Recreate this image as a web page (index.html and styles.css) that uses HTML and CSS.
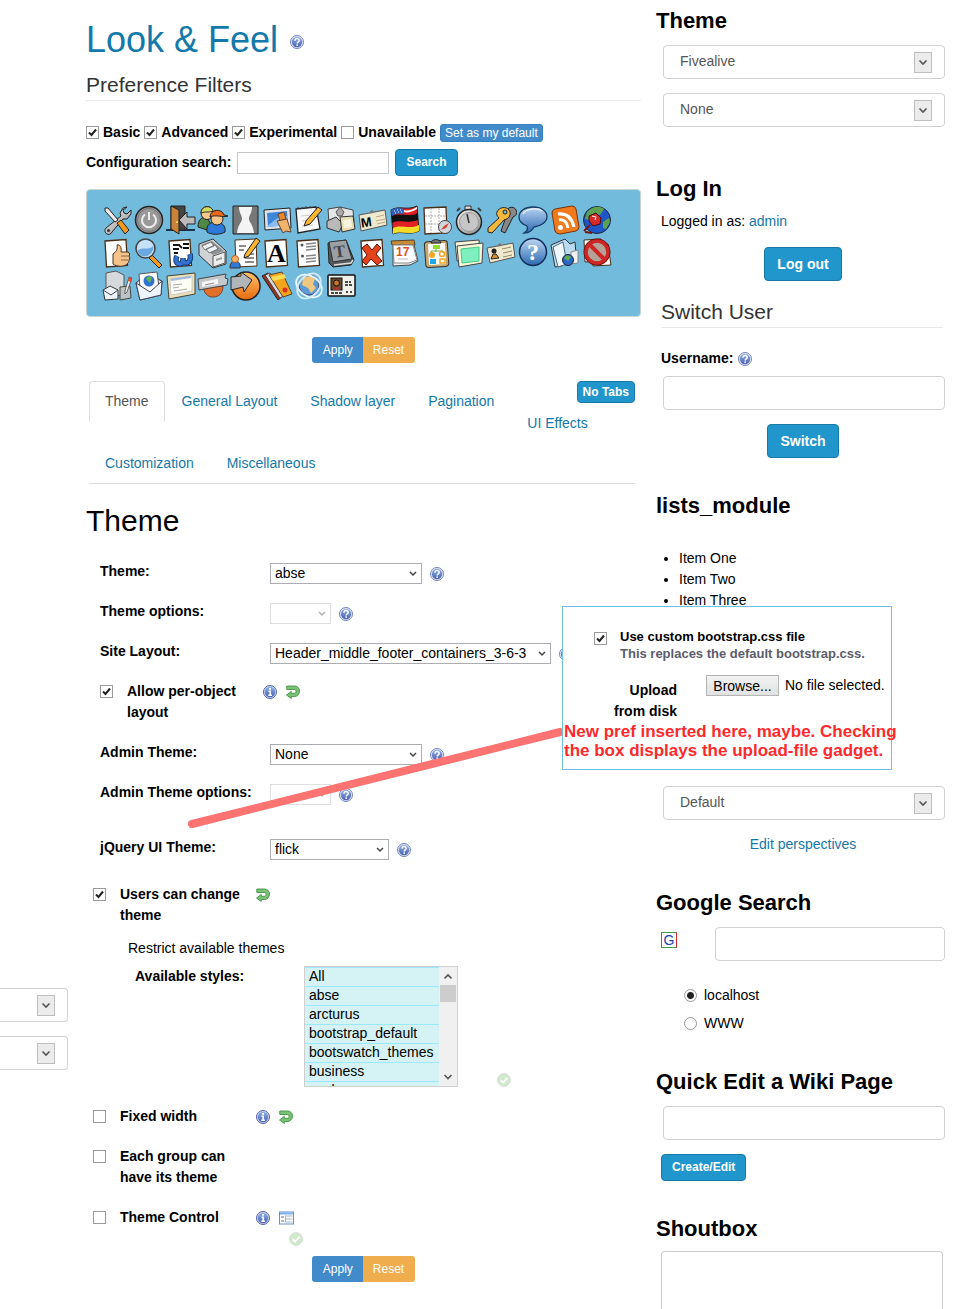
FILE: index.html
```html
<!DOCTYPE html>
<html lang="en">
<head>
    <meta charset="UTF-8">
    <meta name="viewport" content="width=device-width, initial-scale=1.0">
    <title>Look &amp; Feel</title>
    <link rel="stylesheet" href="styles.css">
</head>
<body>
    <!-- shared icons -->
    <svg class="defs" width="0" height="0" aria-hidden="true">
        <defs>
            <linearGradient id="g-blue" x1="0" y1="0" x2="0" y2="1"><stop offset="0" stop-color="#b9d6f2"/><stop offset="1" stop-color="#2d69b0"/></linearGradient>
            <linearGradient id="g-grey" x1="0" y1="0" x2="1" y2="1"><stop offset="0" stop-color="#f4f4f4"/><stop offset="1" stop-color="#8d8d8d"/></linearGradient>
            <linearGradient id="g-orange" x1="0" y1="0" x2="0" y2="1"><stop offset="0" stop-color="#ffc26a"/><stop offset="1" stop-color="#e8690b"/></linearGradient>
            <linearGradient id="g-badge" x1="0" y1="0" x2="0" y2="1"><stop offset="0" stop-color="#8fb0e4"/><stop offset="1" stop-color="#4a62b4"/></linearGradient>
        </defs>
        <symbol id="help" viewBox="0 0 14 14">
            <circle cx="7" cy="7" r="6.5" fill="#e4ebf8" stroke="#7484bd"/>
            <circle cx="7" cy="7" r="5.2" fill="url(#g-badge)"/>
            <path d="M5 5.700c0-2.800 4.200-2.700 4.200-.300C9.200 6.900 7.200 6.900 7.200 8.500" fill="none" stroke="#fff" stroke-width="1.500"/>
            <rect x="6.400" y="9.400" width="1.600" height="1.500" fill="#fff"/>
        </symbol>
        <symbol id="info" viewBox="0 0 14 14">
            <circle cx="7" cy="7" r="6.5" fill="#cfd9f0" stroke="#5461a5"/>
            <circle cx="7" cy="7" r="5.2" fill="url(#g-badge)"/>
            <rect x="6" y="3" width="2" height="1.700" fill="#fff"/>
            <path d="M5.500 6.200H7.200V10M5.300 10.300h3.700" fill="none" stroke="#fff" stroke-width="1.500"/>
        </symbol>
        <symbol id="undo" viewBox="0 0 14 14">
            <path d="M.8 1h7.700c3 0 5 2.200 5 5s-2 5.500-5 5.500H5.300V13.500L.5 10l4.800-3.600v1.900h2.900c1.200 0 1.900-.8 1.900-1.900s-.7-1.900-1.900-1.900H.8z" fill="#7cc078" stroke="#3f9443" stroke-width=".9"/>
        </symbol>
        <symbol id="tick" viewBox="0 0 14 14">
            <circle cx="7" cy="7" r="6.500" fill="#cfe9cb" stroke="#dde0dd"/>
            <path d="M3.800 7.200l2.400 2.400 4.300-4.800" fill="none" stroke="#fff" stroke-width="2"/>
        </symbol>
        <symbol id="panel" viewBox="0 0 15 13">
            <rect x=".5" y=".5" width="14" height="12" fill="#fff" stroke="#6d8fc4"/>
            <rect x="1" y="1" width="13" height="2" fill="#7fb3ee"/>
            <path d="M2 5.500h3M2 9.500h3" stroke="#5a6fa0"/>
            <path d="M6.500 4.500h7M6.500 7.500h7M6.500 10.500h7M6.500 4v7" stroke="#a9b4c9"/>
        </symbol>
        <symbol id="page" viewBox="0 0 32 32">
            <path d="M4 4l21-1.500 1.500 26L5.500 30z" fill="#fff" stroke="#4a2e17" stroke-width="1.300"/>
        </symbol>
    </svg>

    <div class="page">
        <div class="col-left">
            <select class="form-control" aria-label="Site theme"><option></option></select>
            <select class="form-control" aria-label="Theme option"><option></option></select>
        </div>

        <main class="col-main">
            <div class="title">
                <h1><a href="#">Look &amp; Feel</a></h1>
                <svg class="ico"><use href="#help"/></svg>
            </div>

            <form>
                <h4 class="legend">Preference Filters</h4>
                <div class="filters">
                    <input type="checkbox" id="f-basic" checked><label for="f-basic">Basic</label>
                    <input type="checkbox" id="f-adv" checked><label for="f-adv">Advanced</label>
                    <input type="checkbox" id="f-exp" checked><label for="f-exp">Experimental</label>
                    <input type="checkbox" id="f-una"><label for="f-una">Unavailable</label>
                    <button type="button" class="btn-default-set">Set as my default</button>
                </div>
                <div class="config-search">
                    <label for="conf">Configuration search:</label>
                    <input type="text" id="conf" class="plain-input">
                    <button type="button" class="btn btn-sm">Search</button>
                </div>
            </form>

            <nav class="admin-bar">
                <!-- row 1 -->
                <a href="#" title="General"><svg viewBox="0 0 32 32"><path d="M26 3l-4 1-3 5 1 3L5 24c-2 2-1 5 1 6s4 0 5-2l11-13 4 0 4-5 0-4-4 4-3-1-1-3z" fill="url(#g-grey)" stroke="#222"/><path d="M4 4l3 0 10 12-3 2L4 7z" fill="#eee" stroke="#222"/><path d="M16 19l4-3 8 10-4 4z" fill="#f79a1c" stroke="#222"/><circle cx="7.500" cy="26.500" r="1.500" fill="#333"/></svg></a>
                <a href="#" title="Features"><svg viewBox="0 0 32 32"><circle cx="16" cy="16" r="13.500" fill="#999" stroke="#222" stroke-width="1.500"/><circle cx="16" cy="16" r="11.500" fill="none" stroke="#777"/><path d="M12 10.500a7 7 0 1 0 8 0M16 8v8" fill="none" stroke="#eee" stroke-width="2"/></svg></a>
                <a href="#" title="Log in"><svg viewBox="0 0 32 32"><path d="M1 26h29" stroke="#1c3546" stroke-width="2"/><path d="M6 2h14v24H6z" fill="#444" stroke="#222"/><path d="M6 2l8 4v24l-8-5z" fill="#c8823a" stroke="#222"/><circle cx="12" cy="18" r="1" fill="#fd6"/><path d="M14 16l8-8v5h8v7h-8v5z" fill="#bbb" stroke="#222"/></svg></a>
                <a href="#" title="User"><svg viewBox="0 0 32 32"><path d="M1 23c0-7 3-10 9-10l4 8-4 5z" fill="#4e8a45" stroke="#222"/><ellipse cx="10" cy="9" rx="6" ry="6.500" fill="#f5c98c" stroke="#222"/><path d="M4 9c0-8 11-8 12-2-4 2-8 0-12 2z" fill="#d5d95e" stroke="#333"/><path d="M10 28c-1-7 3-10 9-10s10 4 9 10c-5 3-14 3-18 0z" fill="#2f7ad6" stroke="#222"/><ellipse cx="20" cy="15" rx="6" ry="6" fill="#f6c48b" stroke="#222"/><path d="M13 13c0-8 12-9 14-2l4 1c-5 2-12-2-18 1z" fill="#e8681b" stroke="#222"/></svg></a>
                <a href="#" title="Profile"><svg viewBox="0 0 32 32"><path d="M4 2h25v28H4z" fill="#777" stroke="#222"/><path d="M10 3h13c0 6-3 8-3 12 0 3 4 5 5 14H8c1-9 5-11 5-14 0-4-3-6-3-12z" fill="#f4f4f4"/></svg></a>
                <a href="#" title="Look &amp; Feel"><svg viewBox="0 0 32 32"><path d="M3 6l26-2 1 20-26 2z" fill="#dfe4ea" stroke="#222"/><path d="M6 9l20-2 1 14-20 2z" fill="#3d86d8"/><path d="M6 22c5-2 8-10 20-10v9L7 23z" fill="#8bbdf0"/><path d="M17 10l6-2 2 7-6 2z" fill="#e8862b" stroke="#643"/><path d="M16 17l10-2 4 13-5-1-3 2-2-4z" fill="#f2b36c" stroke="#643"/></svg></a>
                <a href="#" title="Editing"><svg viewBox="0 0 32 32"><path d="M3 5l20-2 4 22-22 4z" fill="#fafafa" stroke="#222" stroke-width="1.300"/><path d="M5 5v-2M9 5v-2M13 4v-2M17 4v-2" stroke="#444"/><path d="M8 12l10-1M9 17l8-1M9 22l11-1" stroke="#ccc"/><path d="M13 17L25 3l4 3-12 14-6 2z" fill="#f9b52f" stroke="#222"/></svg></a>
                <a href="#" title="Modules"><svg viewBox="0 0 32 32"><path d="M3 5l12-2 13 3 1 12-13 4-12-3z" fill="#e6e6e6" stroke="#444"/><path d="M2 17l9-4 7 7-4 8-12-4z" fill="#b9b9b9" stroke="#333"/><path d="M15 13l13-1 2 13-13 3z" fill="#e8dfb4" stroke="#333"/><path d="M18 16l8-1 1 8-8 1z" fill="#f8f4e0"/><path d="M11 8l4-5 4 5-2 4h-4z" fill="#aaa" stroke="#555"/></svg></a>
                <a href="#" title="Metatags"><svg viewBox="0 0 32 32"><path d="M2 11l26-5 2 15-26 6z" fill="#efe9cf" stroke="#555"/><path d="M13 7l3-1 .500 3-3 .600z" fill="#777"/><text x="4" y="23" font-size="13" class="ic-b" transform="rotate(-8 8 20)">M</text><path d="M19 13l8-2M19 17l9-2M20 20l8-2" stroke="#b9a97a"/></svg></a>
                <a href="#" title="i18n"><svg viewBox="0 0 32 32"><path d="M2 6C10 1 18 7 28 2l2 25C20 32 12 26 4 30z" fill="#e21f26" stroke="#222"/><path d="M14 6c5 1 9 0 14-3v2c-5 3-9 4-14 3z" fill="#fff"/><path d="M2 6c5-3 9-2 13-1v5C11 9 7 9 3 12z" fill="#2b62c0"/><path d="M5 7h1M8 6h1M11 6h1M6 9h1M9 8h1M12 8h1" stroke="#fff"/><path d="M3 12c9-4 16 2 26-3v7c-10 4-17-1-26 3z" fill="#111"/><path d="M4 24c9-4 15 2 26-3v6C20 32 12 26 4 30z" fill="#f3dc27"/></svg></a>
                <a href="#" title="Maps"><svg viewBox="0 0 32 32"><path d="M3 4l22-1 1 26-22 1z" fill="#fff" stroke="#4a2e17" stroke-width="1.300"/><path d="M10 4v25M18 4v25M4 12h21M4 20h21" stroke="#aaa" stroke-dasharray="2 1"/><circle cx="24" cy="23" r="6.500" fill="#cfd6dc" stroke="#444"/><path d="M20 26l3-4 5-3-3 5z" fill="#e03c28"/></svg></a>
                <a href="#" title="Performance"><svg viewBox="0 0 32 32"><path d="M12 2h6v5h-6z" fill="#ddd" stroke="#333"/><circle cx="16" cy="18" r="12.500" fill="url(#g-grey)" stroke="#222" stroke-width="1.500"/><circle cx="16" cy="18" r="9.500" fill="#c6c6c6" stroke="#999"/><path d="M16 19l-2-9" stroke="#333" stroke-width="1.500"/><path d="M4 7l3-3M28 7l-3-3" stroke="#444" stroke-width="2"/></svg></a>
                <a href="#" title="Security"><svg viewBox="0 0 32 32"><path d="M22 10a5 5 0 1 1 6 3l-8 16-4-2z" fill="#888" stroke="#222"/><path d="M12 8c2-5 9-6 12-2s0 9-5 10L7 29l-4-1v-4L14 14c-2-2-3-4-2-6z" fill="#f5b83a" stroke="#222"/><circle cx="20" cy="8" r="2" fill="#6fb9dd" stroke="#222"/></svg></a>
                <a href="#" title="Comments"><svg viewBox="0 0 32 32"><path d="M16 3c8 0 14 4 14 9.500S24 22 17 23c-2 4-5 6-10 6 3-2 4-5 3-7-5-2-8-5-8-9C2 7 8 3 16 3z" fill="url(#g-blue)" stroke="#173a66" stroke-width="1.300"/><path d="M6 10c2-5 15-7 19-3" stroke="#e5f1fc" fill="none" stroke-width="1.500"/></svg></a>
                <a href="#" title="RSS"><svg viewBox="0 0 32 32"><path d="M6 5l17-3q3 0 4 3l3 18q0 3-3 4L11 30q-4 0-5-3L3 9q0-3 3-4z" fill="#f07a1e" stroke="#7a3305"/><circle cx="11.500" cy="23.500" r="2.500" fill="#fff"/><path d="M10 16c5-1 8 2 9 8M9 10c9-1 14 4 16 13" fill="none" stroke="#fff" stroke-width="3"/></svg></a>
                <a href="#" title="Connect"><svg viewBox="0 0 32 32"><circle cx="16" cy="16" r="13.500" fill="#1f57c8" stroke="#223"/><path d="M6 8c6-7 14-6 17-3l-4 6-5-2-5 7-5-1zM22 18l6-4 1 4-4 7-3-1z" fill="#5aa252"/><path d="M8 12l7-3 5 5-1 6-7 2-4-5z" fill="#d42a2a" stroke="#4a0a0a"/><path d="M9 21l-6 6M4 28l7 1" stroke="#7a1515" stroke-width="2"/><path d="M11 12l4 1-1 3" fill="none" stroke="#fff"/></svg></a>
                <!-- row 2 -->
                <a href="#" title="Rating"><svg viewBox="0 0 32 32"><use href="#page"/><path d="M12 17c3-2 5-5 4-9 3-1 5 3 4 7l7 0c2 1 2 3 1 4 1 1 1 3 0 4 0 2-1 3-2 4-3 3-10 3-14 0z" fill="#f5c28a" stroke="#432"/><path d="M20 19h8M20 23h7" stroke="#864"/></svg></a>
                <a href="#" title="Search"><svg viewBox="0 0 32 32"><path d="M19 18l10 10-3 3-10-10z" fill="#f39a1d" stroke="#222"/><circle cx="12.500" cy="11.500" r="9.500" fill="#c4e1f8" stroke="#444" stroke-width="1.600"/><path d="M4.500 14c4-5 11 0 16-5 0 11-13 14-16 5z" fill="#6ba8e2"/></svg></a>
                <a href="#" title="Wiki"><svg viewBox="0 0 32 32"><use href="#page"/><path d="M8 8h6l3 3M18 7h6M8 12h6M18 11h6M9 16h4" fill="none" stroke="#111" stroke-width="1.800"/><path d="M12 19c-2 4-1 8 3 8 3 0 3-4 3-6 0 3 0 5 3 5 4 0 5-5 4-9" fill="none" stroke="#123a78" stroke-width="5.500"/><path d="M12 19c-2 4-1 8 3 8 3 0 3-4 3-6 0 3 0 5 3 5 4 0 5-5 4-9" fill="none" stroke="#3572d0" stroke-width="3.500"/></svg></a>
                <a href="#" title="File gallery"><svg viewBox="0 0 32 32"><path d="M2 7l14-5 13 12v13l-13 4L2 18z" fill="#d0d2d4" stroke="#333"/><path d="M4 8l11-4 12 10-11 4z" fill="#8b9195"/><path d="M5 9l9-4 3 4-9 4zM9 12l9-4 3 4-9 4z" fill="#f0f4f6" stroke="#555" stroke-width=".700"/><path d="M16 19l12-4v11l-12 4z" fill="#eceded" stroke="#555"/><path d="M19 22l6-2v2l-6 2z" fill="#999"/></svg></a>
                <a href="#" title="Blogs"><svg viewBox="0 0 32 32"><path d="M6 3l21-1 1 27-21 1z" fill="#fff" stroke="#4a2e17"/><path d="M10 9h7M10 13h5M16 17h9M16 21h9M16 25h9" stroke="#666" stroke-width="1.500"/><path d="M16 17L27 1l4 3-11 15-5 2z" fill="#f9b52f" stroke="#222"/><path d="M1 31c0-5 2-7 5-7s6 2 5 7z" fill="#2f7ad6" stroke="#333"/><circle cx="6" cy="22" r="3.500" fill="#f3b069" stroke="#c35d16"/></svg></a>
                <a href="#" title="Text area"><svg viewBox="0 0 32 32"><use href="#page"/><text x="6" y="25" font-size="26" class="ic-serif">A</text></svg></a>
                <a href="#" title="Forums"><svg viewBox="0 0 32 32"><use href="#page"/><path d="M13 7l10-1M13 10l10-1M13 13l10-1M13 19l10-1M13 22l10-1M13 25l10-1" stroke="#888" stroke-width="1.500"/><circle cx="9" cy="8" r="1.500" fill="#555"/><circle cx="9.500" cy="19" r="1.500" fill="#555"/></svg></a>
                <a href="#" title="FAQs"><svg viewBox="0 0 32 32"><path d="M3 6l18-3 8 20-3 5-18 2-4-4z" fill="#55595d" stroke="#222"/><path d="M4 5l17-2 6 19-19 3z" fill="#9aa0a6" stroke="#333"/><path d="M9 28l17-2 2-3" fill="none" stroke="#ddd" stroke-width="1.500"/><text x="9" y="20" font-size="17" class="ic-t" transform="rotate(-8 14 15)">T</text></svg></a>
                <a href="#" title="Trackers off"><svg viewBox="0 0 32 32"><use href="#page"/><path d="M5 11l5-4 5 6 5-6 4 4-5 6 6 7-5 4-6-6-5 6-4-4 5-6z" fill="#e2431d" stroke="#5b1405"/></svg></a>
                <a href="#" title="Calendar"><svg viewBox="0 0 32 32"><path d="M4 6l20-2 5 20-8 4-17 1z" fill="#eee" stroke="#444"/><path d="M2 4l23-1 1 5-23 0z" fill="#c98b35" stroke="#543"/><path d="M4 8h20l4 15-8 3H5z" fill="#fdfdfd" stroke="#888"/><text x="7" y="19" font-size="12" class="ic-red">17</text><path d="M9 22h10" stroke="#bbb"/></svg></a>
                <a href="#" title="Workflow"><svg viewBox="0 0 32 32"><rect x="4" y="4" width="23" height="26" rx="3" fill="#c9a56a" stroke="#333" transform="rotate(-4 16 16)"/><path d="M7 7l17-1 1 21-17 1z" fill="#fff"/><path d="M10 6c0-4 9-5 10 0z" fill="#777" stroke="#222"/><rect x="12" y="8" width="7" height="4" fill="#8fdc2c"/><path d="M15 12v3M10 16v-2h12v2" stroke="#7a4" fill="none"/><circle cx="11" cy="18" r="3" fill="#f5a623"/><circle cx="21" cy="17" r="2.500" fill="none" stroke="#f5a623" stroke-width="1.500"/><rect x="9" y="22" width="6" height="5" fill="#1ba7e8"/><rect x="19" y="22" width="5" height="4" fill="none" stroke="#f5a623" stroke-width="1.500"/></svg></a>
                <a href="#" title="Galleries"><svg viewBox="0 0 32 32"><path d="M2 5l24-2 1 19-23 2z" fill="#f7f4dc" stroke="#444"/><path d="M4 9l26-3-1 20-23 4z" fill="#f7f4dc" stroke="#444"/><path d="M8 12l18-2v14L9 26z" fill="#7ef0c0" stroke="#4c8"/></svg></a>
                <a href="#" title="Articles"><svg viewBox="0 0 32 32"><path d="M2 11l26-5 2 14-25 6z" fill="#efe9cf" stroke="#555"/><path d="M13 7l3-1 .500 3-3 .600z" fill="#777"/><circle cx="9" cy="14" r="2.500" fill="#222"/><path d="M6 22l2-5h3l3 4z" fill="#d9902f" stroke="#222"/><path d="M17 12l9-2M18 16l9-2M18 20l9-2" stroke="#9a8b60"/></svg></a>
                <a href="#" title="Help"><svg viewBox="0 0 32 32"><circle cx="16" cy="15" r="13.500" fill="url(#g-blue)" stroke="#112a55" stroke-width="1.500"/><text x="10" y="23" font-size="24" class="ic-w">?</text></svg></a>
                <a href="#" title="Shared files"><svg viewBox="0 0 32 32"><path d="M2 8l14-6 5 5 5-2 1 12-14 12-7 1z" fill="#b9dcf2" stroke="#333"/><path d="M4 10l10-5 4 22-9 3z" fill="#eef7fd" stroke="#567"/><path d="M22 15l7-2v13l-7 1z" fill="#f0f0f0" stroke="#888"/><circle cx="19" cy="23" r="5.500" fill="#2a66c4" stroke="#223"/><path d="M15 21c3-4 6-2 7-1l-3 4z" fill="#5fae4d"/></svg></a>
                <a href="#" title="Copyright"><svg viewBox="0 0 32 32"><path d="M3 3l17-1 1 22-17 1zM10 9l17-2 3 21-18 1z" fill="#fff" stroke="#4a2e17"/><circle cx="16" cy="15" r="11" fill="none" stroke="#5c0d0d" stroke-width="5"/><circle cx="16" cy="15" r="11" fill="#b5a296" stroke="#cf2525" stroke-width="3.500"/><path d="M9 8l14 14" stroke="#cf2525" stroke-width="4"/></svg></a>
                <!-- row 3 -->
                <a href="#" title="Webmail"><svg viewBox="0 0 32 32"><path d="M5 3l10-2 8 4v19l-11 3-7-3z" fill="#d7dadd" stroke="#555"/><path d="M19 17l10-1 1 12-11 2z" fill="#bfc3c6" stroke="#444"/><path d="M2 20l7-4 8 4v9L4 30z" fill="#eef3fb" stroke="#333"/><path d="M2 20l8 5 7-5" fill="none" stroke="#446"/><path d="M28 7l3 1-5 14-2 2v-3z" fill="#eee" stroke="#333" stroke-width=".700"/><path d="M28 7l3 1-1 4-3-1z" fill="#e54b2c"/></svg></a>
                <a href="#" title="Newsletter"><svg viewBox="0 0 32 32"><path d="M3 13l11-9 15 7-1 14-21 5z" fill="#dfe9f7" stroke="#333"/><path d="M6 4l18-2 2 15-10 6-9-5z" fill="#fff" stroke="#555"/><circle cx="16" cy="11" r="5.500" fill="#2f72cf"/><path d="M13 9c2-4 5-3 6-1l-2 5z" fill="#62b44d"/><path d="M3 13l14 9 12-11-1 14-21 5z" fill="#eef4fc" stroke="#445"/></svg></a>
                <a href="#" title="Polls"><svg viewBox="0 0 32 32"><path d="M2 6l28-3v21L4 29z" fill="#eadfbb" stroke="#443"/><path d="M5 9l22-3v15L6 25z" fill="#fdfdf8" stroke="#bbb" stroke-width=".700"/><path d="M6 10l20-3" stroke="#9cb8dc" stroke-width="2"/><path d="M8 15l9-1M8 18l6-1M9 21l13-2" stroke="#aaa"/></svg></a>
                <a href="#" title="Banners"><svg viewBox="0 0 32 32"><path d="M6 16h20c0 7-4 11-10 11S7 23 6 16z" fill="#e0702b" stroke="#743"/><path d="M1 9l28-5-1 4 3 1-1 6-28 5z" fill="#c4c8cb" stroke="#444"/><path d="M5 12l16-3v5L5 17z" fill="#f5f5f5"/><path d="M8 15l9-2" stroke="#888"/></svg></a>
                <a href="#" title="Directory"><svg viewBox="0 0 32 32"><circle cx="17" cy="16" r="14" fill="url(#g-orange)" stroke="#222" stroke-width="1.500"/><path d="M2 7l10-1V2l11 8-8 12-1-5-12 3z" fill="#b3b6b8" stroke="#222"/></svg></a>
                <a href="#" title="Payment"><svg viewBox="0 0 32 32"><path d="M1 6l6-3 15 23-5 4z" fill="#9b2f1f" stroke="#222"/><path d="M4 5l5-2 14 23-4 2z" fill="#d9dadb" stroke="#444"/><path d="M8 5l13-3 10 22-9 3z" fill="#f5a51b" stroke="#543"/><path d="M10 7l13-3 2 4-13 3z" fill="#f8dd56"/><circle cx="24" cy="20" r="2.500" fill="#d92e22"/></svg></a>
                <a href="#" title="Community"><svg viewBox="0 0 32 32"><circle cx="16" cy="15" r="10" fill="#5c9ad6" stroke="#446"/><path d="M10 8l7-2 5 3-2 5 3 4-5 5-3-5-6-3z" fill="#efc77e"/><ellipse cx="16" cy="16" rx="14" ry="10" fill="none" stroke="#e9f6ff" stroke-width="1.800" transform="rotate(35 16 16)"/><ellipse cx="16" cy="16" rx="14" ry="10" fill="none" stroke="#d4ecfa" stroke-width="1.800" transform="rotate(-50 16 16)"/></svg></a>
                <a href="#" title="User settings"><svg viewBox="0 0 32 32"><rect x="3" y="5" width="27" height="21" rx="1" fill="#f1f1ec" stroke="#111" stroke-width="1.500"/><rect x="6" y="8" width="11" height="12" fill="#6a4a2a" stroke="#111"/><circle cx="11.500" cy="13" r="3" fill="#c4742d" stroke="#111"/><path d="M8 20c0-4 7-4 7 0z" fill="#a33"/><path d="M20 12h6M20 15h7M21 22h2M25 22h2M6 23h11" stroke="#111" stroke-width="1.500" stroke-dasharray="3 1"/></svg></a>
            </nav>

            <div class="btn-group">
                <button type="button" class="btn-apply">Apply</button><button type="reset" class="btn-reset">Reset</button>
            </div>

            <div class="tabs">
                <button type="button" class="btn btn-xs">No Tabs</button>
                <ul>
                    <li class="active"><a href="#">Theme</a></li>
                    <li><a href="#">General Layout</a></li>
                    <li><a href="#">Shadow layer</a></li>
                    <li><a href="#">Pagination</a></li>
                    <li><a href="#">UI Effects</a></li>
                    <li><a href="#">Customization</a></li>
                    <li><a href="#">Miscellaneous</a></li>
                </ul>
            </div>

            <h2>Theme</h2>
            <form>
                <div class="prefs">
                    <div class="pref">
                        <label for="theme">Theme:</label>
                        <select id="theme" class="sel sel-md"><option>abse</option></select>
                        <svg class="ico"><use href="#help"/></svg>
                    </div>
                    <div class="pref">
                        <label for="theme-opt">Theme options:</label>
                        <select id="theme-opt" class="sel sel-xs" disabled><option></option></select>
                        <svg class="ico"><use href="#help"/></svg>
                    </div>
                    <div class="pref">
                        <label for="layout">Site Layout:</label>
                        <select id="layout" class="sel sel-lg"><option>Header_middle_footer_containers_3-6-3</option></select>
                        <svg class="ico"><use href="#help"/></svg>
                    </div>
                    <div class="pref-check">
                        <input type="checkbox" id="per-object" checked>
                        <label for="per-object">Allow per-object layout</label>
                        <svg class="ico"><use href="#info"/></svg>
                        <svg class="ico"><use href="#undo"/></svg>
                    </div>
                    <div class="pref">
                        <label for="admin-theme">Admin Theme:</label>
                        <select id="admin-theme" class="sel sel-md"><option>None</option></select>
                        <svg class="ico"><use href="#help"/></svg>
                    </div>
                    <div class="pref">
                        <label for="admin-opt">Admin Theme options:</label>
                        <select id="admin-opt" class="sel sel-xs" disabled><option></option></select>
                        <svg class="ico"><use href="#help"/></svg>
                    </div>
                </div>
                <div class="prefs prefs-jquery">
                    <div class="pref">
                        <label for="jquery">jQuery UI Theme:</label>
                        <select id="jquery" class="sel sel-sm"><option>flick</option></select>
                        <svg class="ico"><use href="#help"/></svg>
                    </div>
                </div>
                <div class="prefs-user">
                    <div class="pref-check">
                        <input type="checkbox" id="users-change" checked>
                        <label for="users-change">Users can change theme</label>
                        <svg class="ico"><use href="#undo"/></svg>
                    </div>
                    <div class="sub-pref">
                        <p>Restrict available themes</p>
                        <div class="styles-row">
                            <label for="styles">Available styles:</label>
                            <div class="listbox">
                                <select id="styles" multiple size="6">
                                    <option>All</option>
                                    <option>abse</option>
                                    <option>arcturus</option>
                                    <option>bootstrap_default</option>
                                    <option>bootswatch_themes</option>
                                    <option>business</option>
                                    <option>coelesce</option>
                                </select>
                                <div class="scroll">
                                    <svg width="16" height="18" viewBox="0 0 16 18"><path d="M4.500 11.500L8 8l3.500 3.500" fill="none" stroke="#555" stroke-width="1.600"/></svg>
                                    <div class="thumb"></div>
                                    <svg class="down" width="16" height="18" viewBox="0 0 16 18"><path d="M4.500 7L8 10.500 11.500 7" fill="none" stroke="#555" stroke-width="1.600"/></svg>
                                </div>
                            </div>
                            <svg class="ico"><use href="#tick"/></svg>
                        </div>
                    </div>
                    <div class="pref-check">
                        <input type="checkbox" id="fixed">
                        <label for="fixed">Fixed width</label>
                        <svg class="ico"><use href="#info"/></svg>
                        <svg class="ico"><use href="#undo"/></svg>
                    </div>
                    <div class="pref-check">
                        <input type="checkbox" id="group-theme">
                        <label for="group-theme">Each group can have its theme</label>
                    </div>
                    <div class="pref-check last">
                        <input type="checkbox" id="control">
                        <label for="control">Theme Control</label>
                        <svg class="ico"><use href="#info"/></svg>
                        <svg class="ico ico-panel"><use href="#panel"/></svg>
                    </div>
                    <div class="after-check"><svg class="ico"><use href="#tick"/></svg></div>
                </div>
                <div class="btn-group bottom">
                    <button type="button" class="btn-apply">Apply</button><button type="reset" class="btn-reset">Reset</button>
                </div>
            </form>

            <!-- annotation: pointer line and proposed preference -->
            <svg class="pointer" width="380" height="104" viewBox="0 0 380 104"><path d="M6 98L374 6" stroke="#ff7373" stroke-width="8" stroke-linecap="round"/></svg>
            <div class="callout">
                <div class="callout-check">
                    <input type="checkbox" id="custom" checked>
                    <div>
                        <label for="custom">Use custom bootstrap.css file</label>
                        <p>This replaces the default bootstrap.css.</p>
                    </div>
                </div>
                <div class="callout-upload">
                    <label for="browse">Upload from disk</label>
                    <button type="button" id="browse">Browse...</button>
                    <span>No file selected.</span>
                </div>
                <p class="note">New pref inserted here, maybe. Checking<br>the box displays the upload-file gadget.</p>
            </div>
        </main>

        <aside class="col-right">
            <section class="module">
                <h3>Theme</h3>
                <div class="module-body">
                    <select class="form-control" aria-label="Theme"><option>Fivealive</option></select>
                    <select class="form-control" aria-label="Theme option"><option>None</option></select>
                </div>
            </section>

            <section class="module">
                <h3>Log In</h3>
                <div class="module-body">
                    <p>Logged in as: <a href="#">admin</a></p>
                    <button type="button" class="btn center">Log out</button>
                    <h4 class="legend">Switch User</h4>
                    <div class="user-label"><label for="user">Username:</label> <svg class="ico"><use href="#help"/></svg></div>
                    <input type="text" id="user" class="form-control">
                    <button type="button" class="btn center">Switch</button>
                </div>
            </section>

            <section class="module lists">
                <h3>lists_module</h3>
                <ul>
                    <li>Item One</li>
                    <li>Item Two</li>
                    <li>Item Three</li>
                </ul>
            </section>

            <section class="module">
                <div class="module-body perspective">
                    <select class="form-control" aria-label="Perspective"><option>Default</option></select>
                    <a href="#">Edit perspectives</a>
                </div>
            </section>

            <section class="module">
                <h3>Google Search</h3>
                <div class="module-body">
                    <div class="google-row">
                        <label for="google" class="g-logo">G</label>
                        <input type="text" id="google" class="form-control">
                    </div>
                    <div class="radio"><input type="radio" name="site" id="r-local" checked><label for="r-local">localhost</label></div>
                    <div class="radio"><input type="radio" name="site" id="r-www"><label for="r-www">WWW</label></div>
                </div>
            </section>

            <section class="module">
                <h3>Quick Edit a Wiki Page</h3>
                <div class="module-body">
                    <input type="text" class="form-control" aria-label="Page name">
                    <button type="button" class="btn btn-sm">Create/Edit</button>
                </div>
            </section>

            <section class="module shoutbox">
                <h3>Shoutbox</h3>
                <textarea aria-label="Shout"></textarea>
            </section>
        </aside>
    </div>
</body>
</html>
```

FILE: styles.css
```css
* {
    box-sizing: border-box;
}
body {
    margin: 0;
    background: #fff;
    color: #000;
    font-family: "Liberation Sans", Arial, sans-serif;
    font-size: 14px;
    line-height: 21px;
}
h1, h2, h3, h4, p, ul {
    margin: 0;
    padding: 0;
}
a {
    color: #1378ab;
    text-decoration: none;
}
label {
    font-weight: bold;
}
input, select, button, textarea {
    margin: 0;
    font-family: inherit;
    font-size: 14px;
}
.defs {
    position: absolute;
}
.page {
    display: grid;
    grid-template-columns: 68px minmax(0, 1fr) 289px;
    min-height: 100vh;
    padding-right: 16px;
}
.col-left {
    padding-top: 988px;
}
.col-main {
    position: relative;
    margin: 0 15px 0 18px;
    padding-top: 20px;
}
.col-right {
    display: flex;
    flex-direction: column;
    padding-top: 9px;
}

/* common controls */
.ico {
    width: 14px;
    height: 14px;
    flex: none;
}
.ico-panel {
    width: 15px;
}
input[type="checkbox"], input[type="radio"] {
    appearance: none;
    flex: none;
    width: 13px;
    height: 13px;
    border: 1px solid #9a9a9a;
    background: #fff;
}
input[type="checkbox"]:checked {
    background: #fff url("data:image/svg+xml,%3Csvg xmlns='http://www.w3.org/2000/svg' width='11' height='11'%3E%3Cpath d='M2 5.500l2.500 2.500L9 2.500' fill='none' stroke='%23222' stroke-width='2'/%3E%3C/svg%3E") center no-repeat;
}
input[type="radio"] {
    border-radius: 50%;
}
input[type="radio"]:checked {
    background: radial-gradient(circle, #222 0 3px, #fff 4px);
}
.btn {
    padding: 6px 12px;
    border: 1px solid #177aa6;
    border-radius: 4px;
    background: #2196cc;
    color: #fff;
    font-weight: bold;
    line-height: 20px;
}
.btn-sm {
    padding: 5px 10px;
    font-size: 12px;
    line-height: 15px;
}
.btn-xs {
    padding: 1px 5px;
    font-size: 12px;
    line-height: 18px;
}
.form-control {
    display: block;
    width: calc(100% - 2px);
    height: 34px;
    margin: 0 0 14px 2px;
    padding: 0 16px;
    border: 1px solid #d2d2d2;
    border-radius: 4px;
    background-color: #fff;
    color: #555;
}
select.form-control {
    appearance: none;
    padding-bottom: 2px;
    background: #fff url("data:image/svg+xml,%3Csvg xmlns='http://www.w3.org/2000/svg' width='18' height='21'%3E%3Crect x='.5' y='.5' width='17' height='20' fill='%23ebebeb' stroke='%23bebebe'/%3E%3Cpath d='M5.500 8.500L9 12l3.500-3.500' fill='none' stroke='%23555' stroke-width='1.600'/%3E%3C/svg%3E") right 12px center no-repeat;
}
.col-left .form-control {
    width: 100%;
    margin: 0 0 14px;
    border-left: 0;
    border-radius: 0 4px 4px 0;
}
.legend {
    border-bottom: 1px solid #e9e9e9;
    color: #333;
    font-size: 21px;
    font-weight: normal;
    line-height: 30px;
}

/* page head and filters */
.title {
    display: flex;
    align-items: center;
    gap: 12px;
    margin-bottom: 10px;
}
.title .ico {
    margin-top: 4px;
}
h1 {
    font-size: 36px;
    font-weight: normal;
    line-height: 40px;
}
.filters {
    display: flex;
    align-items: center;
    gap: 4px;
    margin-top: 21px;
}
.btn-default-set {
    padding: 0 4px;
    border: 1px solid #357ebd;
    border-radius: 3px;
    background: #428bca;
    color: #fff;
    font-size: 12px;
    line-height: 16px;
}
.config-search {
    display: flex;
    align-items: center;
    gap: 6px;
    margin-top: 6px;
}
.plain-input {
    width: 152px;
    height: 22px;
    border: 1px solid #c3c6cb;
}
.admin-bar {
    display: flex;
    flex-wrap: wrap;
    row-gap: 1px;
    margin-top: 13px;
    padding: 14px;
    border: 1px solid #c8d8d0;
    border-radius: 4px;
    background: #72bbdd;
}
.admin-bar a, .admin-bar svg {
    display: block;
    width: 32px;
    height: 32px;
}
.ic-b {
    font-weight: bold;
}
.ic-serif {
    font-family: "Liberation Serif", serif;
    font-weight: bold;
}
.ic-t {
    font-family: "Liberation Serif", serif;
    font-weight: bold;
    fill: #444;
}
.ic-red {
    font-weight: bold;
    fill: #e0521c;
}
.ic-w {
    font-family: "Liberation Serif", serif;
    font-weight: bold;
    fill: #fff;
}
.btn-group {
    display: flex;
    justify-content: center;
    margin: 20px 0 18px;
}
.btn-group button {
    height: 26px;
    padding: 0 10px;
    border: 0;
    color: #fff;
    font-size: 12px;
}
.btn-group .btn-apply {
    padding-left: 11px;
    border-radius: 3px 0 0 3px;
    background: #428bca;
}
.btn-group .btn-reset {
    padding-right: 11px;
    border-radius: 0 3px 3px 0;
    background: #f0ad4e;
}
.btn-group.bottom {
    margin: 10px 0 0;
}

/* tabs */
.tabs {
    margin: 0 6px 20px 3px;
}
.tabs .btn {
    float: right;
}
.tabs ul {
    list-style: none;
    border-bottom: 1px solid #ddd;
}
.tabs ul::after {
    content: "";
    display: block;
    clear: both;
}
.tabs li {
    float: left;
    margin-bottom: -1px;
}
.tabs li a {
    display: block;
    margin-right: 1px;
    padding: 9px 15px;
    border: 1px solid transparent;
    border-radius: 4px 4px 0 0;
}
.tabs .active a {
    border-color: #ddd #ddd transparent;
    color: #555;
}
h2 {
    margin-bottom: 24px;
    font-size: 30px;
    font-weight: normal;
    line-height: 33px;
}

/* preferences */
.prefs {
    padding-left: 14px;
}
.prefs-jquery {
    margin-top: 32px;
}
.prefs-user {
    margin-top: 24px;
    padding-left: 7px;
}
.pref {
    display: flex;
    align-items: flex-start;
    gap: 8px;
    margin-bottom: 17px;
}
.pref label {
    width: 162px;
    white-space: nowrap;
}
.prefs-jquery .pref {
    margin-bottom: 0;
}
.sel {
    appearance: none;
    height: 21px;
    margin-top: 2px;
    padding: 0 18px 2px 4px;
    border: 1px solid #abadb3;
    border-radius: 0;
    background: #fff url("data:image/svg+xml,%3Csvg xmlns='http://www.w3.org/2000/svg' width='8' height='6'%3E%3Cpath d='M1 1l3 3 3-3' fill='none' stroke='%23444' stroke-width='1.500'/%3E%3C/svg%3E") right 4px center no-repeat;
    color: #000;
}
.sel:disabled {
    opacity: .4;
}
.sel-xs {
    width: 61px;
}
.sel-sm {
    width: 119px;
}
.sel-md {
    width: 152px;
}
.sel-lg {
    width: 281px;
}
.pref .ico {
    margin-top: 6px;
}
.pref-check {
    display: flex;
    align-items: flex-start;
    margin-bottom: 19px;
}
.pref-check input {
    margin: 4px 14px 0 0;
}
.pref-check label {
    width: 136px;
    padding-right: 12px;
}
.pref-check .ico {
    margin: 4px 9px 0 0;
}
.pref-check.last {
    margin-bottom: 4px;
}
.after-check {
    display: flex;
    padding-left: 196px;
}
.sub-pref {
    margin: -7px 0 19px;
    padding-left: 35px;
}
.styles-row {
    display: flex;
    margin-top: 7px;
    padding-left: 7px;
}
.styles-row label {
    width: 169px;
}
.styles-row .ico {
    align-self: flex-end;
    margin-left: 39px;
}
.listbox {
    display: flex;
    width: 154px;
    height: 121px;
    border: 1px solid #cfcfcf;
}
.listbox select {
    flex: 1;
    min-width: 0;
    padding: 0;
    border: 0;
    border-radius: 0;
    overflow: hidden;
    scrollbar-width: none;
}
.listbox option {
    min-height: 0;
    height: 19px;
    padding: 0 4px;
    border-top: 1px solid #9be8fa;
    background: #d5f2f5;
    color: #000;
    line-height: 18px;
}
.scroll {
    display: flex;
    flex-direction: column;
    width: 18px;
    padding-left: 1px;
    background: #f0f0f0;
}
.scroll .thumb {
    height: 17px;
    margin-right: 1px;
    background: #cdcdcd;
}
.scroll .down {
    margin-top: auto;
}

/* callout */
.pointer {
    position: absolute;
    top: 726px;
    left: 100px;
}
.callout {
    position: absolute;
    top: 606px;
    left: 476px;
    width: 330px;
    padding: 21px 0 9px;
    border: 1px solid #6fbfe0;
    background: #fff;
    z-index: 2;
}
.callout-check {
    display: flex;
    gap: 13px;
    padding-left: 31px;
    font-size: 13px;
    font-weight: bold;
    line-height: 17px;
}
.callout-check input {
    margin-top: 4px;
}
.callout-check label {
    display: block;
}
.callout-check p {
    color: #5c5c6b;
}
.callout-upload {
    display: flex;
    align-items: flex-start;
    margin-top: 13px;
}
.callout-upload label {
    width: 114px;
    padding: 5px 0 0 50px;
    text-align: right;
}
.callout-upload button {
    width: 73px;
    height: 21px;
    margin: 0 6px 0 29px;
    padding: 0;
    border: 1px solid #b4b4b4;
    background: linear-gradient(#f2f2f2, #e0e2e2);
}
.note {
    padding-left: 1px;
    color: #fb2a2d;
    font-size: 17px;
    font-weight: bold;
    line-height: 19px;
    white-space: nowrap;
}

/* modules */
.module {
    margin-bottom: 36px;
}
.module h3 {
    margin-bottom: 12px;
    font-size: 22px;
    line-height: 24px;
}
.module-body {
    padding-left: 5px;
}
.module-body p {
    margin: -2px 0 15px;
}
.center {
    display: block;
    margin: 0 auto;
}
.module .legend {
    margin: 16px 2px 20px 0;
}
.user-label {
    display: flex;
    align-items: center;
    gap: 5px;
    margin-bottom: 7px;
}
.lists ul {
    margin-top: 30px;
    padding-left: 23px;
}
.lists {
    margin-bottom: 175px;
}
.perspective {
    text-align: center;
}
.google-row {
    display: flex;
    margin-bottom: 10px;
}
.google-row .form-control {
    flex: 1;
    width: auto;
    margin-left: 38px;
}
.g-logo {
    width: 16px;
    height: 16px;
    margin-top: 5px;
    border: 1px solid;
    border-color: #3f9f45 #d8232a #3f9f45 #3b6fd4;
    color: #1a3fae;
    font-weight: normal;
    line-height: 14px;
    text-align: center;
}
.radio {
    display: flex;
    align-items: center;
    gap: 7px;
    margin-bottom: 7px;
    padding-left: 23px;
}
.radio:last-child {
    margin-bottom: 0;
}
.radio label {
    font-weight: normal;
}
.shoutbox {
    display: flex;
    flex: 1;
    flex-direction: column;
    margin-bottom: 0;
}
.shoutbox h3 {
    margin-bottom: 10px;
}
.shoutbox textarea {
    flex: 1;
    min-height: 50px;
    margin: 0 2px 0 5px;
    border: 1px solid #ccc;
    border-bottom: 0;
    border-radius: 4px 4px 0 0;
    resize: none;
}
```
